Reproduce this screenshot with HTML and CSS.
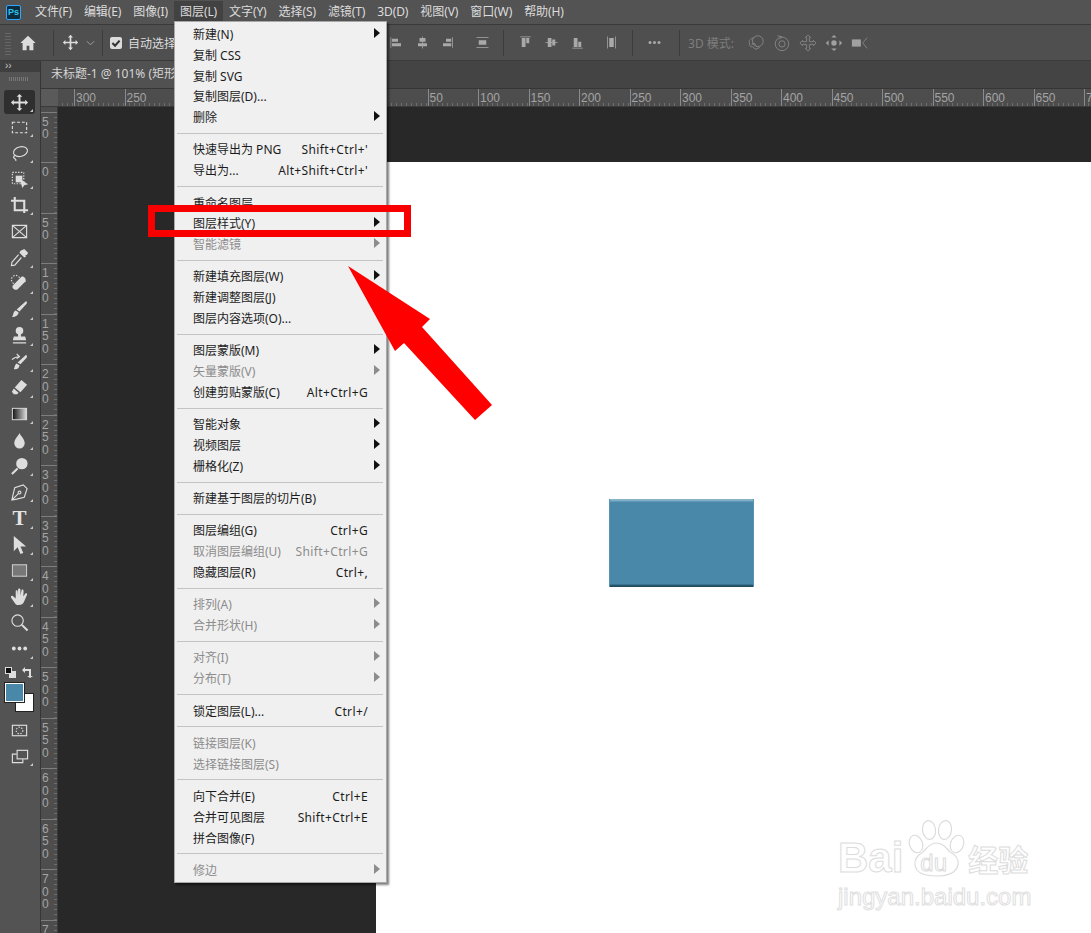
FILE: index.html
```html
<!DOCTYPE html>
<html lang="zh">
<head>
<meta charset="utf-8">
<title>Photoshop</title>
<link rel="stylesheet" href="styles.css">
</head>
<body>
<div class="app">
  <header class="menubar">
    <div class="pslogo">Ps</div>
    <nav class="menus">
      <span class="m">文件(F)</span><span class="m">编辑(E)</span><span class="m">图像(I)</span><span class="m active">图层(L)</span><span class="m">文字(Y)</span><span class="m">选择(S)</span><span class="m">滤镜(T)</span><span class="m">3D(D)</span><span class="m">视图(V)</span><span class="m">窗口(W)</span><span class="m">帮助(H)</span>
    </nav>
  </header>

  <div class="optbar">
    <div class="grip"></div>
    <svg class="oi home" viewBox="0 0 20 20"><path d="M10 2 1.5 10H4v8h4.5v-5h3v5H16v-8h2.500z"/></svg>
    <div class="osep s1"></div>
    <svg class="oi omove" viewBox="0 0 20 20"><path d="M10 1l3 3h-2v5h5V7l3 3-3 3v-2h-5v5h2l-3 3-3-3h2v-5H4v2l-3-3 3-3v2h5V4H7z"/></svg>
    <svg class="chev" viewBox="0 0 10 6"><path d="M1 1l4 4 4-4"/></svg>
    <div class="osep s2"></div>
    <div class="chk"><svg viewBox="0 0 10 10"><path d="M2 5l2.200 2.200L8 3"/></svg></div>
    <span class="autosel">自动选择</span>
    <div class="alignset">
      <svg class="ai a1" viewBox="0 0 20 20"><path d="M2 3v14h1V3zM4 5h8v4H4zM4 11h12v4H4z"/></svg>
      <svg class="ai a2" viewBox="0 0 20 20"><path d="M9.500 2h1v16h-1zM6 4h8v5H6zM4 11h12v4H4z"/></svg>
      <svg class="ai a3" viewBox="0 0 20 20"><path d="M17 3v14h-1V3zM8 5h7v4H8zM4 11h11v4H4z"/></svg>
      <svg class="ai a4" viewBox="0 0 20 20"><path d="M2 3h16v1H2zM2 16h16v1H2zM5 7h10v6H5z"/></svg>
      <div class="osep s3"></div>
      <svg class="ai a5" viewBox="0 0 20 20"><path d="M3 2h14v1H3zM5 4h5v12H5zM11 4h4v7h-4z"/></svg>
      <svg class="ai a6" viewBox="0 0 20 20"><path d="M2 9.500h16v1H2zM5 4h5v12H5zM11 6h4v8h-4z"/></svg>
      <svg class="ai a7" viewBox="0 0 20 20"><path d="M3 17h14v1H3zM5 4h5v12H5zM11 9h4v7h-4z"/></svg>
      <svg class="ai a8" viewBox="0 0 20 20"><path d="M4 2h1v16H4zM15 2h1v16h-1zM7 4h6v12H7z"/></svg>
      <div class="osep s4"></div>
      <svg class="ai a9" viewBox="0 0 20 20"><circle cx="4" cy="10" r="2"/><circle cx="10" cy="10" r="2"/><circle cx="16" cy="10" r="2"/></svg>
      <div class="osep s5"></div>
      <span class="mode3d">3D 模式:</span>
      <svg class="d3 d1" viewBox="0 0 20 20"><circle cx="12" cy="8" r="6"/><path d="M8 4C4 5 1 8 3 10c-1 3 1 5 3 4l3 3 5-2M5 12l3-2 2 3"/></svg>
      <svg class="d3 d2" viewBox="0 0 20 20"><circle cx="10" cy="11" r="7.500"/><circle cx="10" cy="11" r="3.500"/><path d="M5 2l5 1-3 3"/></svg>
      <svg class="d3 d3b" viewBox="0 0 20 20"><path d="M10 1l3 3h-1.500v4.500H16V7l3 3-3 3v-1.500h-4.500V16H13l-3 3-3-3h1.500v-4.500H4V13l-3-3 3-3v1.500h4.500V4H7z"/></svg>
      <svg class="d3 d4 solid" viewBox="0 0 20 20"><path d="M10 1l3 3h-6zM10 19l3-3H7zM1 10l3-3v6zM19 10l-3-3v6z"/><circle cx="10" cy="10" r="3"/></svg>
      <svg class="d3 d5" viewBox="0 0 20 20"><path class="fillit" d="M1 6h10v8H1z"/><path d="M18 4l-5 6 5 6"/></svg>
    </div>
  </div>

  <main class="work">
    <aside class="toolbar">
      <div class="tb-head">››</div>
      <div class="tb-grip"></div>
      <div class="tools">
        <div class="t on mk"><svg viewBox="0 0 20 20"><path class="f" d="M10 1l3 3h-2v5h5V7l3 3-3 3v-2h-5v5h2l-3 3-3-3h2v-5H4v2l-3-3 3-3v2h5V4H7z"/></svg></div>
        <div class="t mk"><svg viewBox="0 0 20 20"><rect class="s dash" x="2.500" y="4.500" width="15" height="11"/></svg></div>
        <div class="t mk"><svg viewBox="0 0 20 20"><ellipse class="s" cx="11" cy="8" rx="7.500" ry="5" transform="rotate(-15 11 8)"/><path class="s" d="M6 12c-2 0-3 2-1.500 3S7 16 6 18"/></svg></div>
        <div class="t mk"><svg viewBox="0 0 20 20"><rect class="s dot" x="2.500" y="2.500" width="12" height="12"/><path class="f" d="M6 6h7v7H6z"/><path class="f" d="M10 9l9 6-4 1-2 3z"/></svg></div>
        <div class="t mk"><svg viewBox="0 0 20 20"><path class="s thick" d="M1 5h14v13M5 1v14h14"/></svg></div>
        <div class="t"><svg viewBox="0 0 20 20"><path class="s" d="M2.500 3.500h15v13h-15zM2.500 3.500l15 13M17.500 3.500l-15 13"/></svg></div>
        <div class="t mk"><svg viewBox="0 0 20 20"><path class="f" d="M13 2l2-1 4 4-1 2-2 1 1 1-2 1-5-5 1-2z"/><path class="s" d="M9 7L2 15l-.5 3.500L5 18l7-8"/></svg></div>
        <div class="t mk"><svg viewBox="0 0 20 20"><path class="f" d="M3 12l9-9c2-1.500 5 1.500 4.500 4.500L8 16c-2 2-7-1-5-4z"/><circle class="s dot" cx="6" cy="6" r="4.500"/></svg></div>
        <div class="t mk"><svg viewBox="0 0 20 20"><path class="f" d="M17 1c1 1 1 2 .5 3L10 12l-3-2zM6 11l3 2c0 3-3 5-7 5 2-2 1-6 4-7z"/></svg></div>
        <div class="t mk"><svg viewBox="0 0 20 20"><circle class="f" cx="10" cy="5" r="4"/><path class="f" d="M8.500 8h3v3H16l1 4H3l1-4h4.500zM3 17h14v1.500H3z"/></svg></div>
        <div class="t mk"><svg viewBox="0 0 20 20"><path class="f" d="M17 3c1 1 1 2 .5 3L11 13l-3-2zM7 12l3 2c0 3-3 5-6 4 1-2 1-5 3-6z"/><path class="s" d="M2 8c3-3 5-3 8-3M7 2l3 3-3 2"/></svg></div>
        <div class="t mk"><svg viewBox="0 0 20 20"><path class="f" d="M12 2l6 5-7 8-6-5zM4 11l5 4.500-1.500 1.500H4l-2-2.500z"/></svg></div>
        <div class="t mk"><svg viewBox="0 0 20 20"><defs><linearGradient id="gr" x1="0" x2="1"><stop offset="0" stop-color="#111"/><stop offset="1" stop-color="#ddd"/></linearGradient></defs><rect x="2.500" y="3.500" width="15" height="12" fill="url(#gr)" stroke="#ddd"/></svg></div>
        <div class="t mk"><svg viewBox="0 0 20 20"><path class="f" d="M10 2c1 3 5.500 6 5.500 11a5.500 5.500 0 0 1-11 0C4.500 8 9 5 10 2z"/></svg></div>
        <div class="t mk"><svg viewBox="0 0 20 20"><circle class="f" cx="12.500" cy="7" r="6"/><path class="s thick" d="M8 12l-6 6"/></svg></div>
        <div class="t mk"><svg viewBox="0 0 20 20"><path class="s" d="M14 2l4 4-3 9-8 2-5 1 1-5 2-8zM3 17l6-6"/><circle class="s" cx="10" cy="10" r="1.500"/></svg></div>
        <div class="t mk glyph"><span class="tg">T</span></div>
        <div class="t mk"><svg viewBox="0 0 20 20"><path class="f" d="M4 1l13 11h-6l3 7-3 1-3-7-4 4z"/></svg></div>
        <div class="t mk"><svg viewBox="0 0 20 20"><rect x="2.500" y="4" width="15" height="12" fill="#787878" stroke="#d8d8d8"/></svg></div>
        <div class="t mk"><svg viewBox="0 0 20 20"><path class="f" d="M6 5c0-2 2-2 2 0v4l.5-6c0-2 2.500-2 2.500 0v6l1-5c.3-2 2.500-1.500 2.300.5L14 10l2-3c1-1 2.500 0 2 1l-3 7c-1 3-3 4-6 4-2 0-3.500-1-4.500-3L1 11c-.5-1.500 1-2.500 2-1.500L6 12z"/></svg></div>
        <div class="t"><svg viewBox="0 0 20 20"><circle class="s" cx="8" cy="8" r="6"/><path class="s thick" d="M12.500 12.500l6 6"/></svg></div>
        <div class="t mk"><svg viewBox="0 0 20 20"><circle class="f" cx="4" cy="10" r="2"/><circle class="f" cx="10" cy="10" r="2"/><circle class="f" cx="16" cy="10" r="2"/></svg></div>
      </div>
      <div class="colors">
        <svg class="defc" viewBox="0 0 11 11"><rect x="4" y="4" width="7" height="7" fill="#ddd"/><rect x="0.500" y="0.500" width="6" height="6" fill="#111" stroke="#ddd"/></svg>
        <svg class="swap" viewBox="0 0 11 11"><path class="f" d="M0 3l3-3v2h6v7h2l-3 2-3-2h2V4H3v2z"/></svg>
        <div class="bgc"></div>
        <div class="fgc"></div>
      </div>
      <div class="t qm"><svg viewBox="0 0 20 20"><rect class="s" x="2.500" y="4.500" width="15" height="11"/><circle class="s dot" cx="10" cy="10" r="3.500"/></svg></div>
      <div class="t mk"><svg viewBox="0 0 20 20"><rect class="s" x="7.500" y="3.500" width="11" height="9"/><path class="s" d="M7 7.500H2.500v9h11V13"/></svg></div>
    </aside>

    <section class="stage">
      <div class="tabs"><div class="tab">未标题-1 @ 101% (矩形 1, RGB/8#)</div></div>
      <div class="hruler">
        <div class="corner"></div>
        <div class="hr-lead"></div>
        <span class="hc">300</span><span class="hc">250</span><span class="hc">200</span><span class="hc">150</span><span class="hc">100</span><span class="hc">50</span><span class="hc">0</span><span class="hc">50</span><span class="hc">100</span><span class="hc">150</span><span class="hc">200</span><span class="hc">250</span><span class="hc">300</span><span class="hc">350</span><span class="hc">400</span><span class="hc">450</span><span class="hc">500</span><span class="hc">550</span><span class="hc">600</span><span class="hc">650</span><span class="hc">700</span>
      </div>
      <div class="body">
        <div class="vruler">
          <div class="vr-lead"></div>
          <div class="vc"><i>5</i><i>0</i></div>
          <div class="vc"><i>0</i></div>
          <div class="vc"><i>5</i><i>0</i></div>
          <div class="vc"><i>1</i><i>0</i><i>0</i></div>
          <div class="vc"><i>1</i><i>5</i><i>0</i></div>
          <div class="vc"><i>2</i><i>0</i><i>0</i></div>
          <div class="vc"><i>2</i><i>5</i><i>0</i></div>
          <div class="vc"><i>3</i><i>0</i><i>0</i></div>
          <div class="vc"><i>3</i><i>5</i><i>0</i></div>
          <div class="vc"><i>4</i><i>0</i><i>0</i></div>
          <div class="vc"><i>4</i><i>5</i><i>0</i></div>
          <div class="vc"><i>5</i><i>0</i><i>0</i></div>
          <div class="vc"><i>5</i><i>5</i><i>0</i></div>
          <div class="vc"><i>6</i><i>0</i><i>0</i></div>
          <div class="vc"><i>6</i><i>5</i><i>0</i></div>
          <div class="vc"><i>7</i><i>0</i><i>0</i></div>
          <div class="vc"><i>7</i><i>5</i><i>0</i></div>
        </div>
        <div class="canvas">
          <div class="doc"><div class="shape"></div></div>
        </div>
      </div>
    </section>
  </main>

  <div class="dropdown">
    <div class="mi sub">新建(N)</div>
    <div class="mi">复制 CSS</div>
    <div class="mi">复制 SVG</div>
    <div class="mi">复制图层(D)...</div>
    <div class="mi sub">删除</div>
    <div class="sep"></div>
    <div class="mi"><span>快速导出为 PNG</span><span class="sc">Shift+Ctrl+'</span></div>
    <div class="mi"><span>导出为...</span><span class="sc">Alt+Shift+Ctrl+'</span></div>
    <div class="sep"></div>
    <div class="mi">重命名图层</div>
    <div class="mi sub">图层样式(Y)</div>
    <div class="mi sub dis">智能滤镜</div>
    <div class="sep"></div>
    <div class="mi sub">新建填充图层(W)</div>
    <div class="mi sub">新建调整图层(J)</div>
    <div class="mi">图层内容选项(O)...</div>
    <div class="sep"></div>
    <div class="mi sub">图层蒙版(M)</div>
    <div class="mi sub dis">矢量蒙版(V)</div>
    <div class="mi"><span>创建剪贴蒙版(C)</span><span class="sc">Alt+Ctrl+G</span></div>
    <div class="sep"></div>
    <div class="mi sub">智能对象</div>
    <div class="mi sub">视频图层</div>
    <div class="mi sub">栅格化(Z)</div>
    <div class="sep"></div>
    <div class="mi">新建基于图层的切片(B)</div>
    <div class="sep"></div>
    <div class="mi"><span>图层编组(G)</span><span class="sc">Ctrl+G</span></div>
    <div class="mi dis"><span>取消图层编组(U)</span><span class="sc">Shift+Ctrl+G</span></div>
    <div class="mi"><span>隐藏图层(R)</span><span class="sc">Ctrl+,</span></div>
    <div class="sep"></div>
    <div class="mi sub dis">排列(A)</div>
    <div class="mi sub dis">合并形状(H)</div>
    <div class="sep"></div>
    <div class="mi sub dis">对齐(I)</div>
    <div class="mi sub dis">分布(T)</div>
    <div class="sep"></div>
    <div class="mi"><span>锁定图层(L)...</span><span class="sc">Ctrl+/</span></div>
    <div class="sep"></div>
    <div class="mi dis">链接图层(K)</div>
    <div class="mi dis">选择链接图层(S)</div>
    <div class="sep"></div>
    <div class="mi"><span>向下合并(E)</span><span class="sc">Ctrl+E</span></div>
    <div class="mi"><span>合并可见图层</span><span class="sc">Shift+Ctrl+E</span></div>
    <div class="mi">拼合图像(F)</div>
    <div class="sep"></div>
    <div class="mi sub dis">修边</div>
  </div>

  <div class="redbox"></div>
  <svg class="redarrow" viewBox="0 0 150 160"><polygon points="2,2 84,55 76,63 146,141 129,156 58,79 49,87"/></svg>

  <div class="wm">
    <div class="wm-top">
      <span class="wm-bai">Bai</span>
      <div class="wm-paw">
        <svg viewBox="0 0 60 62"><g class="pawl"><ellipse cx="9" cy="25" rx="6.500" ry="9" transform="rotate(-20 9 25)"/><ellipse cx="22" cy="11" rx="6.500" ry="9.500" transform="rotate(-8 22 11)"/><ellipse cx="38" cy="11" rx="6.500" ry="9.500" transform="rotate(8 38 11)"/><ellipse cx="50" cy="25" rx="6.500" ry="9" transform="rotate(20 50 25)"/><path d="M29 24c7 0 10 5 14 9 6 3 9 8 8 13-2 8-9 11-21 11S9 54 8 46c-1-5 3-10 8-13 4-4 7-9 13-9z"/></g></svg>
        <span class="wm-du">du</span>
      </div>
      <span class="wm-cn">经验</span>
    </div>
    <div class="wm-url">jingyan.baidu.com</div>
  </div>
</div>
</body>
</html>
```
FILE: styles.css
```css
* { box-sizing: border-box; }
html, body { margin: 0; padding: 0; background: #282828; }
body { width: 1091px; height: 933px; overflow: hidden; font-family: "Noto Sans", "Noto Sans CJK SC", sans-serif; font-size: 12px; }
.app { position: relative; width: 1091px; height: 933px; display: flex; flex-direction: column; overflow: hidden; }

.menubar { height: 25px; flex: none; background: #535353; border-bottom: 1px solid #3a3a3a; display: flex; align-items: center; padding-left: 6px; }
.pslogo { width: 15px; height: 15px; flex: none; background: #0d2c3e; border: 1px solid #31a8ff; border-radius: 2px; color: #31c5f0; font: bold 9px/13px "Liberation Sans", sans-serif; text-align: center; }
.menus { display: flex; margin-left: 8px; }
.m { padding: 0 6px; height: 22px; line-height: 22px; color: #dcdcdc; white-space: nowrap; letter-spacing: -0.1px; }
.active { background: #424242; }

.optbar { position: relative; height: 36px; flex: none; background: #4f4f4f; border-bottom: 1px solid #3a3a3a; display: flex; align-items: center; padding-left: 5px; }
.grip { width: 6px; height: 24px; flex: none; background: repeating-linear-gradient(0deg, #666 0 1px, transparent 1px 3px); }
.oi { fill: #dcdcdc; flex: none; }
.home { width: 18px; height: 18px; margin-left: 8px; }
.osep { width: 1px; height: 26px; background: #3c3c3c; flex: none; }
.s1 { margin-left: 16px; }
.omove { width: 17px; height: 17px; margin-left: 8px; }
.chev { width: 9px; height: 6px; margin-left: 7px; fill: none; stroke: #a8a8a8; flex: none; }
.s2 { margin-left: 7px; }
.chk { width: 12px; height: 12px; margin-left: 7px; background: #dcdcdc; border-radius: 2px; flex: none; display: flex; }
.chk svg { fill: none; stroke: #333; stroke-width: 1.800; }
.autosel { margin-left: 6px; color: #dcdcdc; white-space: nowrap; font-size: 12px; }
.alignset { display: flex; align-items: center; margin-left: 213px; }
.ai { width: 15px; height: 15px; flex: none; fill: #a9a9a9; }
.a2 { margin-left: 11px; }
.a3 { margin-left: 10px; }
.a4 { margin-left: 20px; }
.s3 { margin-left: 13px; }
.a5 { margin-left: 14px; }
.a6, .a7 { margin-left: 11px; }
.a8 { margin-left: 19px; }
.s4 { margin-left: 13px; }
.a9 { margin-left: 14px; }
.s5 { margin-left: 17px; }
.mode3d { margin-left: 8px; color: #7e7e7e; font-size: 12px; white-space: nowrap; width: 50px; flex: none; }
.d3 { width: 18px; height: 18px; flex: none; fill: none; stroke: #838383; stroke-width: 1.100; margin-left: 8px; }
.d1 { margin-left: 9px; }
.d3.solid { fill: #a0a0a0; stroke: none; }
.fillit { fill: #a0a0a0; stroke: none; }

.work { flex: 1; display: flex; min-height: 0; }
.toolbar { width: 41px; flex: none; background: #535353; border-right: 1px solid #363636; display: flex; flex-direction: column; }
.tb-head { height: 11px; background: #3f3f3f; color: #c8c8c8; font: 10px/9px "Liberation Sans", sans-serif; padding-left: 5px; }
.tb-grip { height: 18px; background: repeating-linear-gradient(90deg, #777 0 1px, transparent 1px 2px) 9px 5px / 20px 4px no-repeat; }
.tools { display: flex; flex-direction: column; }
.t { position: relative; height: 26.100px; width: 39px; display: flex; align-items: center; justify-content: center; }
.t svg { width: 19px; height: 19px; }
.on { background: #2f2f2f; border-radius: 3px; width: 31px; margin-left: 4px; height: 24px; }
.mk::after { content: ""; position: absolute; right: 6px; bottom: 3px; border-style: solid; border-width: 0 0 3px 3px; border-color: transparent transparent #c8c8c8 transparent; }
.on.mk::after { right: 2px; bottom: 2px; }
.f { fill: #dedede; }
.s { fill: none; stroke: #dedede; stroke-width: 1.200; }
.dash { stroke-dasharray: 3 2; }
.dot { stroke-dasharray: 1.500 1.500; }
.thick { stroke-width: 2.200; }
.glyph .tg { color: #e4e4e4; font: bold 21px/1 "Liberation Serif", serif; }

.colors { position: relative; height: 53px; flex: none; margin-top: 4px; }
.defc { position: absolute; left: 5px; top: 1px; width: 11px; height: 11px; }
.swap { position: absolute; left: 22px; top: 1px; width: 11px; height: 11px; }
.bgc { position: absolute; left: 15px; top: 27px; width: 19px; height: 19px; background: #fff; border: 1px solid #222; }
.fgc { position: absolute; left: 5px; top: 17px; width: 19px; height: 19px; background: #4a88aa; border: 1px solid #fff; outline: 1px solid #222; }
.qm { margin-top: -2px; }

.stage { flex: 1; display: flex; flex-direction: column; min-width: 0; }
.tabs { height: 28px; flex: none; background: #444; display: flex; border-bottom: 1px solid #363636; }
.tab { width: 340px; background: #515151; color: #d6d6d6; padding-left: 10px; line-height: 26px; white-space: nowrap; overflow: hidden; }
.hruler { height: 18px; flex: none; display: flex; background-color: #4d4d4d; overflow: hidden; white-space: nowrap; border-bottom: 1px solid #3a3a3a; }
.corner { width: 17px; flex: none; background: #5a5a5a; }
.hr-lead { width: 16px; flex: none; background: repeating-linear-gradient(90deg, transparent 0 4.050px, #6e6e6e 4.050px 5.050px) bottom / 100% 3px no-repeat; }
.hc { width: 50.500px; flex: none; height: 17px; padding-left: 2px; font: 12px/19px "Liberation Sans", sans-serif; color: #a4a4a4;
  background:
    linear-gradient(#8a8a8a, #8a8a8a) 0 0 / 1px 17px no-repeat,
    repeating-linear-gradient(90deg, transparent 0 4.050px, #6e6e6e 4.050px 5.050px) bottom / 100% 3px no-repeat; }

.body { flex: 1; display: flex; min-height: 0; }
.vruler { width: 17px; flex: none; background: #4d4d4d; border-right: 1px solid #3a3a3a; overflow: hidden; }
.vr-lead { height: 4.500px; }
.vc { height: 50.500px; padding: 3px 0 0 1px; border-top: 1px solid #7d7d7d; font: 12px/12.500px "Liberation Sans", sans-serif; color: #a4a4a4;
  background: repeating-linear-gradient(180deg, transparent 0 4.050px, #6e6e6e 4.050px 5.050px) right / 3px 100% no-repeat; }
.vc i { display: block; font-style: normal; }

.canvas { flex: 1; background: #282828; padding: 55px 0 0 318px; display: flex; min-width: 0; }
.doc { flex: 1; background: #fff; padding: 337px 0 0 233px; }
.shape { width: 145px; height: 88px; background: linear-gradient(#8ab6cb 0, #7cabc2 2px, #4a88aa 3px, #4a88aa 85px, #2a5d76 86px, #1e4558 88px); box-shadow: inset 1px 0 #5a93b2, inset -1px 0 #5a93b2; }

.dropdown { position: absolute; left: 174px; top: 21px; width: 213px; height: 862px; background: #f0f0f0; border: 1px solid #a8a8a8; box-shadow: 2px 2px 2px rgba(0,0,0,.5); padding-top: 3px; color: #1c1c1c; }
.mi { position: relative; height: 20.800px; line-height: 20px; padding: 0 18px 0 18px; display: flex; justify-content: space-between; white-space: nowrap; }
.sc { letter-spacing: 0.370px; }
.dis { color: #8c8c8c; }
.sub::after { content: ""; position: absolute; right: 6px; top: 3px; border-style: solid; border-width: 5px 0 5px 6px; border-color: transparent transparent transparent #111; }
.dis.sub::after { border-left-color: #8c8c8c; }
.sep { height: 11.500px; position: relative; margin: 0 3px 0 2px; }
.sep::after { content: ""; position: absolute; left: 0; right: 0; top: 4px; height: 1px; background: #c4c4c4; }

.redbox { position: absolute; left: 148px; top: 205px; width: 263px; height: 32px; border: 7px solid #f80000; }
.redarrow { position: absolute; left: 346px; top: 264px; width: 150px; height: 160px; fill: #fe0000; }

.wm { position: absolute; left: 838px; top: 815px; width: 200px; color: #fff; }
.wm-top { display: flex; align-items: flex-end; height: 66px; }
.wm-bai { font: bold 42px/46px "Liberation Sans", sans-serif; color: #fff; -webkit-text-stroke: 1px #dcdcdc; }
.wm-paw { position: relative; width: 60px; height: 62px; margin-left: 4px; flex: none; }
.wm-paw svg { width: 60px; height: 62px; display: block; }
.pawl { fill: #fff; stroke: #dcdcdc; stroke-width: 1.200; }
.wm-du { position: absolute; left: 13px; top: 32px; font: 24px/24px "Liberation Sans", sans-serif; color: #fff; -webkit-text-stroke: 1px #dcdcdc; }
.wm-cn { font: bold 30px/46px "Noto Sans CJK SC", sans-serif; color: #fff; -webkit-text-stroke: 1px #dcdcdc; white-space: nowrap; margin-left: 1px; }
.wm-url { font: 24px/28px "Liberation Sans", sans-serif; color: #fff; -webkit-text-stroke: 1px #e0e0e0; white-space: nowrap; margin-top: 2px; }
```
